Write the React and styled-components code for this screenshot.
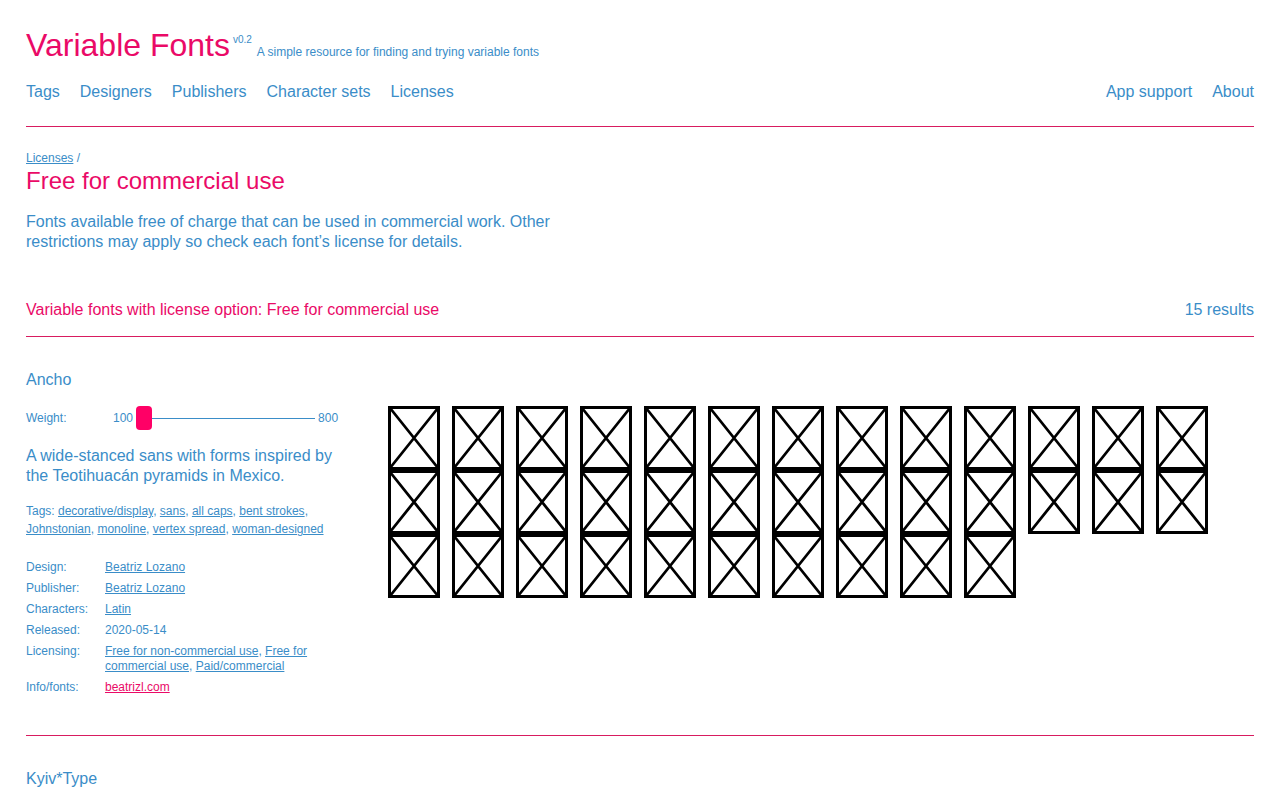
import React from "react";
import styled, { createGlobalStyle } from "styled-components";

const pink = "#ea0a67";
const line = "#d81b60";
const blue = "#3a8dc8";

const GlobalStyle = createGlobalStyle`
  html, body {
    margin: 0;
    padding: 0;
    background: #fff;
  }
  body {
    font-family: "Liberation Sans", Arial, sans-serif;
    color: ${blue};
  }
  a {
    color: ${blue};
  }
`;

const Page = styled.div`
  padding: 27px 26px 0;
`;

const TitleRow = styled.div`
  display: flex;
  align-items: baseline;
`;

const Title = styled.h1`
  margin: 0;
  font-size: 32px;
  line-height: 36px;
  font-weight: normal;
  color: ${pink};
`;

const Version = styled.span`
  align-self: flex-start;
  font-size: 10px;
  line-height: 10px;
  margin: 8px 0 0 3px;
  color: ${blue};
`;

const Tagline = styled.span`
  font-size: 12px;
  margin-left: 5px;
`;

const Nav = styled.nav`
  display: flex;
  justify-content: space-between;
  margin-top: 19px;
  font-size: 16px;
  line-height: 20px;
`;

const NavGroup = styled.div`
  display: flex;
  gap: 20px;
`;

const NavLink = styled.a`
  text-decoration: none;
`;

const Rule = styled.div`
  margin-top: ${(p) => p.$top || 0}px;
  height: 1px;
  background: ${line};
`;

const Crumb = styled.div`
  margin-top: 23px;
  font-size: 12px;
  line-height: 17px;
`;

const Heading = styled.h2`
  margin: 0;
  font-size: 24px;
  line-height: 28px;
  font-weight: normal;
  color: ${pink};
`;

const Intro = styled.p`
  margin: 17px 0 0;
  max-width: 560px;
  font-size: 16px;
  line-height: 20px;
`;

const ResultsBar = styled.div`
  display: flex;
  justify-content: space-between;
  margin-top: 48px;
  font-size: 16px;
  line-height: 20px;
`;

const ResultsTitle = styled.span`
  color: ${pink};
`;

const Entry = styled.section`
  padding-top: ${(p) => p.$top || 33}px;
`;

const FontName = styled.h3`
  margin: 0;
  font-size: 16px;
  line-height: 20px;
  font-weight: normal;
`;

const EntryBody = styled.div`
  display: grid;
  grid-template-columns: 320px 1fr;
  column-gap: 42px;
  margin-top: 16px;
`;

const Info = styled.div`
  display: flex;
  flex-direction: column;
`;

const AxisRow = styled.div`
  display: flex;
  align-items: center;
  height: 24px;
  font-size: 12px;
`;

const AxisLabel = styled.span`
  width: 87px;
`;

const Range = styled.input`
  -webkit-appearance: none;
  appearance: none;
  width: 179px;
  height: 24px;
  margin: 0 3px;
  background: transparent;
  &::-webkit-slider-runnable-track {
    height: 1px;
    background: ${blue};
  }
  &::-webkit-slider-thumb {
    -webkit-appearance: none;
    width: 16px;
    height: 24px;
    margin-top: -11.5px;
    border-radius: 4px;
    background: #ff0066;
    border: 0;
  }
`;

const Blurb = styled.p`
  margin: 16px 0 0;
  font-size: 16px;
  line-height: 20px;
`;

const Tags = styled.p`
  margin: 16px 0 0;
  font-size: 12px;
  line-height: 18px;
`;

const Meta = styled.dl`
  display: grid;
  grid-template-columns: 79px 1fr;
  row-gap: 6px;
  margin: 22px 0 0;
  font-size: 12px;
  line-height: 15px;
`;

const MetaKey = styled.dt`
  margin: 0;
`;

const MetaValue = styled.dd`
  margin: 0;
  a {
    color: ${(p) => (p.$pink ? pink : blue)};
  }
`;

const Glyphs = styled.div`
  display: flex;
  flex-wrap: wrap;
  align-content: flex-start;
`;

const GlyphCell = styled.div`
  width: 64px;
  height: 64px;
  svg {
    display: block;
  }
`;

const Glyph = () => (
  <GlyphCell>
    <svg width="52" height="64" viewBox="0 0 52 64">
      <rect x="1.5" y="1.5" width="49" height="61" fill="none" stroke="#000" strokeWidth="3" />
      <path d="M2 2 L50 62 M50 2 L2 62" stroke="#000" strokeWidth="2.8" fill="none" />
    </svg>
  </GlyphCell>
);

const tags = [
  "decorative/display",
  "sans",
  "all caps",
  "bent strokes",
  "Johnstonian",
  "monoline",
  "vertex spread",
  "woman-designed",
];

const LinkList = ({ items }) =>
  items.map((t, i) => (
    <React.Fragment key={t}>
      <a href="#">{t}</a>
      {i < items.length - 1 ? ", " : ""}
    </React.Fragment>
  ));

export default function App() {
  return (
    <>
      <GlobalStyle />
      <Page>
        <TitleRow>
          <Title>Variable Fonts</Title>
          <Version>v0.2</Version>
          <Tagline>A simple resource for finding and trying variable fonts</Tagline>
        </TitleRow>
        <Nav>
          <NavGroup>
            <NavLink href="#">Tags</NavLink>
            <NavLink href="#">Designers</NavLink>
            <NavLink href="#">Publishers</NavLink>
            <NavLink href="#">Character sets</NavLink>
            <NavLink href="#">Licenses</NavLink>
          </NavGroup>
          <NavGroup>
            <NavLink href="#">App support</NavLink>
            <NavLink href="#">About</NavLink>
          </NavGroup>
        </Nav>
        <Rule $top={24} />

        <Crumb>
          <a href="#">Licenses</a> /
        </Crumb>
        <Heading>Free for commercial use</Heading>
        <Intro>
          Fonts available free of charge that can be used in commercial work.
          Other restrictions may apply so check each font’s license for details.
        </Intro>

        <ResultsBar>
          <ResultsTitle>Variable fonts with license option: Free for commercial use</ResultsTitle>
          <span>15 results</span>
        </ResultsBar>
        <Rule $top={16} />

        <Entry>
          <FontName>Ancho</FontName>
          <EntryBody>
            <Info>
              <AxisRow>
                <AxisLabel>Weight:</AxisLabel>
                <span>100</span>
                <Range type="range" min="100" max="800" defaultValue="100" />
                <span>800</span>
              </AxisRow>
              <Blurb>
                A wide-stanced sans with forms inspired by the Teotihuacán
                pyramids in Mexico.
              </Blurb>
              <Tags>
                Tags: <LinkList items={tags} />
              </Tags>
              <Meta>
                <MetaKey>Design:</MetaKey>
                <MetaValue><a href="#">Beatriz Lozano</a></MetaValue>
                <MetaKey>Publisher:</MetaKey>
                <MetaValue><a href="#">Beatriz Lozano</a></MetaValue>
                <MetaKey>Characters:</MetaKey>
                <MetaValue><a href="#">Latin</a></MetaValue>
                <MetaKey>Released:</MetaKey>
                <MetaValue>2020-05-14</MetaValue>
                <MetaKey>Licensing:</MetaKey>
                <MetaValue>
                  <LinkList items={["Free for non-commercial use", "Free for commercial use", "Paid/commercial"]} />
                </MetaValue>
                <MetaKey>Info/fonts:</MetaKey>
                <MetaValue $pink><a href="#">beatrizl.com</a></MetaValue>
              </Meta>
            </Info>
            <Glyphs>
              {Array.from({ length: 36 }, (_, i) => (
                <Glyph key={i} />
              ))}
            </Glyphs>
          </EntryBody>
          <Rule $top={40} />
        </Entry>

        <Entry $top={33}>
          <FontName>Kyiv*Type</FontName>
        </Entry>
      </Page>
    </>
  );
}
